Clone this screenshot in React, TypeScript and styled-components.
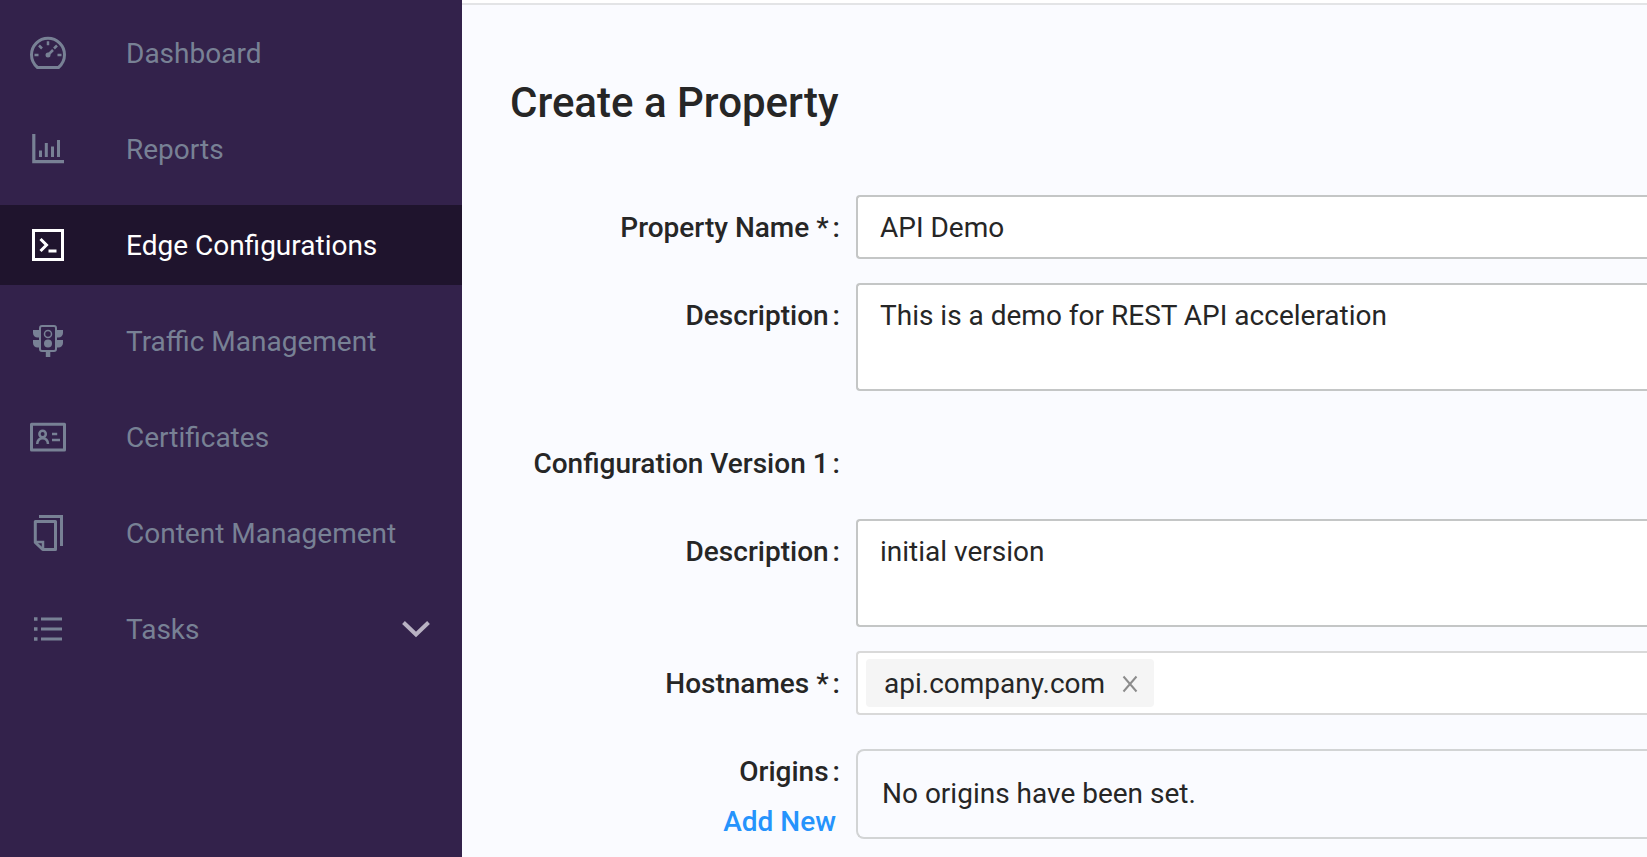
import React from "react";
import styled, { createGlobalStyle, css } from "styled-components";

const GlobalStyle = createGlobalStyle`
  * { box-sizing: border-box; }
  body {
    margin: 0;
    background: #fafbff;
    color: #262626;
    font: 400 28px/44px Roboto, "Liberation Sans", sans-serif;
  }
`;

const Layout = styled.div`
  display: flex;
  min-height: 100vh;
`;

const Sidebar = styled.nav`
  flex: 0 0 462px;
  padding: 13px 0;
  background: #33224b;
`;

const Menu = styled.ul`
  display: flex;
  flex-direction: column;
  gap: 16px;
  margin: 0;
  padding: 0;
  list-style: none;
`;

const MenuLink = styled.a<{ $active?: boolean }>`
  display: flex;
  align-items: center;
  height: 80px;
  padding: 0 30px;
  color: ${(p) => (p.$active ? "#ffffff" : "#788195")};
  background: ${(p) => (p.$active ? "#1f142d" : "transparent")};
  text-decoration: none;
`;

const MenuText = styled.span`
  padding-top: 2px;
`;

const MenuIcon = styled.svg`
  flex: none;
  width: 36px;
  height: 36px;
  margin-right: 60px;
  fill: none;
  stroke: currentColor;
  stroke-width: 3;
`;

const Chevron = styled.svg`
  width: 30px;
  height: 20px;
  margin-left: auto;
  fill: none;
  stroke: #b9b2c3;
  stroke-width: 4;
`;

const Main = styled.main`
  flex: 1;
  min-width: 0;
  border-top: 3px solid #ffffff;
`;

const Content = styled.div`
  border-top: 2px solid #e3e4e6;
  padding: 74px 0 18px 48px;
`;

const Title = styled.h1`
  margin: 0 0 68px;
  font-size: 42px;
  font-weight: 500;
  line-height: 48px;
`;

const Form = styled.form`
  display: flex;
  flex-direction: column;
  gap: 24px;
`;

const Row = styled.div<{ $section?: boolean }>`
  display: flex;
  align-items: flex-start;
  margin-top: ${(p) => (p.$section ? "16px" : "0")};
`;

const LabelCell = styled.div`
  flex: 0 0 346px;
  display: flex;
  flex-direction: column;
  align-items: flex-end;
  padding: 2px 16px 0 0;
`;

const labelText = css`
  font-weight: 500;
  line-height: 62px;
  white-space: nowrap;
`;

const Label = styled.label`
  ${labelText}
`;

const GroupLabel = styled.span`
  ${labelText}
`;

const Colon = styled.span`
  margin-left: 4px;
`;

const AddLink = styled.a`
  margin-right: 4px;
  color: #2593fc;
  font-weight: 500;
  line-height: 38px;
  text-decoration: none;
`;

const box = css`
  flex: 1;
  min-width: 0;
  border: 2px solid #c4c6c6;
  border-right: 0;
  border-radius: 4px 0 0 4px;
  background: #ffffff;
  color: inherit;
  font: inherit;
  outline: none;
`;

const TextInput = styled.input`
  ${box}
  height: 64px;
  padding: 0 22px;
`;

const TextArea = styled.textarea`
  ${box}
  display: block;
  height: 108px;
  padding: 9px 22px;
  resize: none;
`;

const TagField = styled.div`
  ${box}
  display: flex;
  gap: 8px;
  padding: 6px 8px;
  border-color: #d9d9d9;
`;

const Tag = styled.span`
  display: flex;
  align-items: center;
  gap: 15px;
  height: 48px;
  padding: 2px 14px 0 18px;
  border-radius: 4px;
  background: #f5f5f5;
`;

const RemoveButton = styled.button`
  display: flex;
  padding: 0;
  border: 0;
  background: none;
  color: #8c8c8c;

  svg {
    width: 20px;
    height: 20px;
    fill: none;
    stroke: currentColor;
    stroke-width: 2;
  }
`;

const TagInput = styled.input`
  flex: 1;
  min-width: 0;
  padding: 0;
  border: 0;
  outline: none;
  background: none;
  font: inherit;
`;

const EmptyBox = styled.div`
  flex: 1;
  margin-top: 10px;
  padding: 21px 24px;
  border: 2px solid #d2d4d5;
  border-right: 0;
  border-radius: 8px 0 0 8px;
`;

const icons = {
  dashboard: (
    <>
      <path d="M7.500 32.500C4 29.500 1.500 25 1.500 19.800a16.500 16.500 0 0 1 33 0c0 5.200-2.500 9.700-6 12.700z" strokeLinejoin="round" />
      <path d="M18 6.300v4M4.500 20h4M27.500 20h4M9 10.500l3 3M27 10.500l-3 3" strokeWidth="2.500" />
      <path d="M18 20l5-5" strokeWidth="2.500" />
      <circle cx="18" cy="20" r="2.500" fill="currentColor" stroke="none" />
    </>
  ),
  reports: (
    <>
      <path d="M3.800 3v27.700H34" strokeWidth="3.200" />
      <path d="M10.500 19.500V26M16.300 12v14M22.500 15.500V26M28.500 9v17" />
    </>
  ),
  edge: (
    <>
      <path d="M3.500 3.500h29v29h-29z" />
      <path d="M10.500 12l6 6-6 6M18.500 24H26.500" />
    </>
  ),
  traffic: (
    <>
      <rect x="10" y="3" width="16" height="25" rx="2" strokeWidth="2" />
      <circle cx="18" cy="11" r="3.500" strokeWidth="1.500" />
      <g fill="currentColor" stroke="none">
        <circle cx="18" cy="20.500" r="4" />
        <path d="M3 7h6v7.500H7.500A4.500 4.500 0 0 1 3 10zM3 17h6v7.500H7.500A4.500 4.500 0 0 1 3 20zM33 7h-6v7.500h1.500A4.500 4.500 0 0 0 33 10zM33 17h-6v7.500h1.500A4.500 4.500 0 0 0 33 20zM15.800 29h4.500v5h-4.500z" />
      </g>
    </>
  ),
  certificates: (
    <>
      <rect x="1.500" y="5.200" width="33" height="25.800" strokeLinejoin="round" />
      <g strokeWidth="2.500">
        <circle cx="12.600" cy="15" r="3.200" />
        <path d="M7.200 25c.3-3.500 2.200-5.700 5.400-5.700s5.100 2.200 5.400 5.700M22 15h5.200M22 21h8" />
      </g>
    </>
  ),
  content: (
    <>
      <path d="M9 1.500h22.500v29.500" />
      <path d="M5.300 6.500h20.200v28H12.700l-7.400-7z" strokeLinejoin="round" />
      <path d="M5 27h8v7.500" strokeWidth="2.500" />
    </>
  ),
  tasks: (
    <>
      <path d="M11 8h21M11 18h21M11 28h21" />
      <path d="M4 8h3.500M4 18h3.500M4 28h3.500" strokeWidth="3.500" />
    </>
  ),
};

const menu: { icon: keyof typeof icons; text: string; active?: boolean; expandable?: boolean }[] = [
  { icon: "dashboard", text: "Dashboard" },
  { icon: "reports", text: "Reports" },
  { icon: "edge", text: "Edge Configurations", active: true },
  { icon: "traffic", text: "Traffic Management" },
  { icon: "certificates", text: "Certificates" },
  { icon: "content", text: "Content Management" },
  { icon: "tasks", text: "Tasks", expandable: true },
];

export default function App() {
  return (
    <>
      <GlobalStyle />
      <Layout>
        <Sidebar aria-label="Main">
          <Menu>
            {menu.map((item) => (
              <li key={item.text}>
                <MenuLink href="#" $active={item.active} aria-current={item.active ? "page" : undefined}>
                  <MenuIcon viewBox="0 0 36 36" aria-hidden="true">{icons[item.icon]}</MenuIcon>
                  <MenuText>{item.text}</MenuText>
                  {item.expandable && (
                    <Chevron viewBox="0 0 30 20" aria-hidden="true">
                      <path d="M1.500 3.500L14 15.500L26.500 3.500" />
                    </Chevron>
                  )}
                </MenuLink>
              </li>
            ))}
          </Menu>
        </Sidebar>
        <Main>
          <Content>
            <Title>Create a Property</Title>
            <Form>
              <Row>
                <LabelCell>
                  <Label htmlFor="name">Property Name *<Colon>:</Colon></Label>
                </LabelCell>
                <TextInput id="name" defaultValue="API Demo" />
              </Row>
              <Row>
                <LabelCell>
                  <Label htmlFor="description">Description<Colon>:</Colon></Label>
                </LabelCell>
                <TextArea id="description" defaultValue="This is a demo for REST API acceleration" />
              </Row>
              <Row $section>
                <LabelCell>
                  <GroupLabel>Configuration Version 1<Colon>:</Colon></GroupLabel>
                </LabelCell>
              </Row>
              <Row>
                <LabelCell>
                  <Label htmlFor="version">Description<Colon>:</Colon></Label>
                </LabelCell>
                <TextArea id="version" defaultValue="initial version" />
              </Row>
              <Row>
                <LabelCell>
                  <Label htmlFor="hostnames">Hostnames *<Colon>:</Colon></Label>
                </LabelCell>
                <TagField>
                  <Tag>
                    api.company.com
                    <RemoveButton type="button" aria-label="Remove api.company.com">
                      <svg viewBox="0 0 20 20" aria-hidden="true">
                        <path d="M3.500 2.500l13 15M16.500 2.500l-13 15" />
                      </svg>
                    </RemoveButton>
                  </Tag>
                  <TagInput id="hostnames" />
                </TagField>
              </Row>
              <Row>
                <LabelCell>
                  <GroupLabel>Origins<Colon>:</Colon></GroupLabel>
                  <AddLink href="#">Add New</AddLink>
                </LabelCell>
                <EmptyBox>No origins have been set.</EmptyBox>
              </Row>
            </Form>
          </Content>
        </Main>
      </Layout>
    </>
  );
}
